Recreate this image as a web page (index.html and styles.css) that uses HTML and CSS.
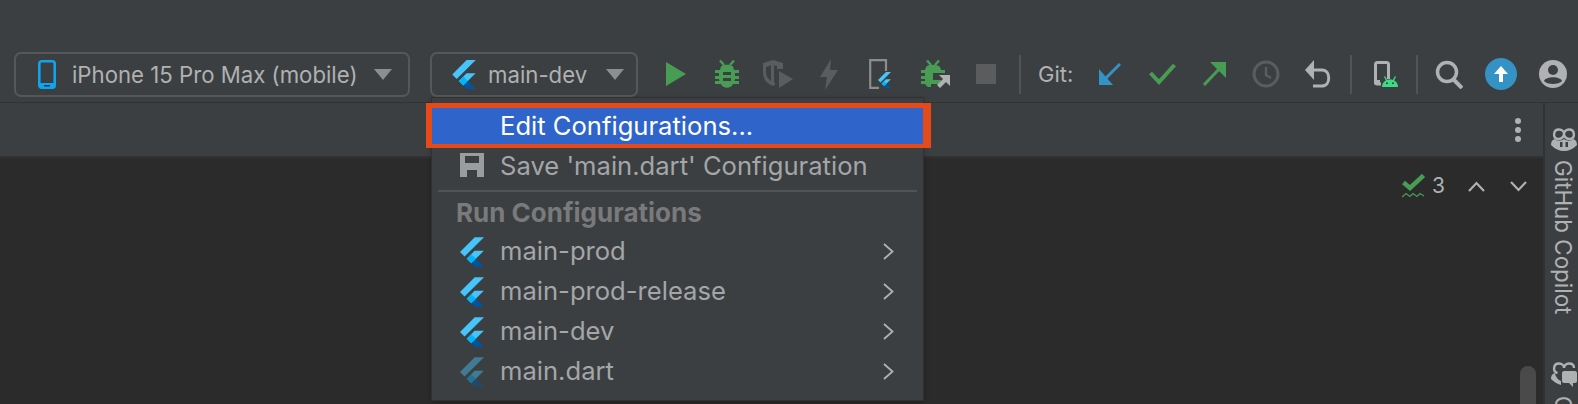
FILE: index.html
```html
<!DOCTYPE html>
<html lang="en">
<head>
<meta charset="utf-8">
<title>IDE run configurations</title>
<link rel="stylesheet" href="styles.css">
</head>
<body>
<svg class="defs" width="0" height="0" aria-hidden="true">
  <symbol id="flutter" viewBox="0 0 257 317">
    <path fill="#47c5fb" d="M157.7 0 0 157.7l48.8 48.8L257.3 0z"/>
    <path fill="#47c5fb" d="M156.6 145.4 72.1 229.8l49 49.7L255.3 145.4z"/>
    <path fill="#00569e" d="m121.1 279.5 37.1 37.1h98.1l-85.5-85.8z"/>
    <path fill="#00b5f8" d="m71.6 230.4 48.8-48.8 49.4 49.2-48.7 48.7z"/>
  </symbol>
  <symbol id="bug" viewBox="0 0 26 30">
    <path fill="none" stroke="#499c54" stroke-width="2.4" d="M6 1.5 10 6M20 1.5 16 6"/>
    <path fill="#499c54" d="M7 7.5C9 5 17 5 19 7.5L20 11H25V14H21V17H25V20H21L20.5 22H25V25H19C17 30 9 30 7 25H1V22H5.500L5 20H1V17H5V14H1V11H6Z"/>
    <path fill="#3c3f41" d="M9 13H17V16H9ZM9 19H17V22H9Z"/>
  </symbol>
</svg>
<div class="window">
  <header class="toolbar">
    <div class="combo combo-device">
      <svg class="phone" width="18" height="29" viewBox="0 0 18 29"><rect x="1.300" y="1.300" width="15.400" height="26.400" rx="2.500" fill="none" stroke="#0ea5ee" stroke-width="2.600"/><rect x="1" y="23" width="16" height="5.500" rx="2" fill="#0ea5ee"/><rect x="6" y="25" width="6" height="1.500" fill="#12384f"/></svg>
      <span class="combo-label">iPhone 15 Pro Max (mobile)</span>
      <span class="caret"></span>
    </div>
    <div class="combo combo-config">
      <svg class="logo-sm" width="24" height="29"><use href="#flutter"/></svg>
      <span class="combo-label">main-dev</span>
      <span class="caret"></span>
    </div>
    <div class="tools tools-run">
      <span class="tool"><svg width="20" height="24" viewBox="0 0 20 24"><path fill="#499c54" d="M0 0 20 12 0 24z"/></svg></span>
      <span class="tool"><svg width="26" height="30"><use href="#bug"/></svg></span>
      <span class="tool"><svg width="30" height="28" viewBox="0 0 30 28"><path fill="#5a5c5e" d="M0 3 10 0 20 3V9H14V6L11 5V22L12 23V25L10 26C4 24 0 19 0 12ZM6 6 3 7V12C3 16 5 19 8 21V5Z" fill-rule="evenodd"/><path fill="#5a5c5e" d="M16 11 30 19 16 28z"/></svg></span>
      <span class="tool"><svg width="18" height="31" viewBox="0 0 18 31"><path fill="#5a5c5e" d="M11 0 0 18H7L5 31 18 11H10Z"/></svg></span>
      <span class="tool"><svg width="22" height="30" viewBox="0 0 22 30"><path fill="none" stroke="#8a8c8e" stroke-width="2.200" d="M17 12V1.200H1.200V28.800H10"/><use href="#flutter" x="9" y="12" width="13" height="18"/></svg></span>
      <span class="tool tool-wide"><svg width="30" height="30" viewBox="0 0 30 30"><path fill="none" stroke="#499c54" stroke-width="2.400" d="M7 1.500 11 6M19 1.500 15 6"/><path fill="#499c54" d="M6 8C8 5 17 5 20 8L21 11H25V14H13V21H21V25H11V28H8C6 27 6 26 5 25H1V22H5V20H1V17H5V14H1V11H5Z"/><path fill="#afb1b3" d="M19 16H30V27L26 23 20 29 17 26 23 20Z"/></svg></span>
      <span class="tool tool-stop"><span class="stop"></span></span>
    </div>
    <span class="sep sep-run"></span>
    <span class="git-label">Git:</span>
    <div class="tools tools-git">
      <span class="tool tool-git"><svg width="22" height="22" viewBox="0 0 22 22"><path fill="none" stroke="#3592c4" stroke-width="3" d="M21 1 4 18"/><path fill="#3592c4" d="M0 6 0 22H14Z"/></svg></span>
      <span class="tool tool-git"><svg width="27" height="22" viewBox="0 0 27 22"><path fill="none" stroke="#499c54" stroke-width="4" d="M1.500 10 10 19 25.500 2"/></svg></span>
      <span class="tool tool-git"><svg width="23" height="24" viewBox="0 0 23 24"><path fill="none" stroke="#499c54" stroke-width="3" d="M1 23 18 5"/><path fill="#499c54" d="M7 0H23V16Z"/></svg></span>
      <span class="tool tool-git"><svg width="28" height="28" viewBox="0 0 28 28"><circle cx="14" cy="14" r="12" fill="none" stroke="#5a5c5e" stroke-width="3"/><path fill="none" stroke="#5a5c5e" stroke-width="2.500" d="M14 7V15L19 18"/></svg></span>
      <span class="tool tool-git"><svg width="26" height="28" viewBox="0 0 26 28"><path fill="none" stroke="#afb1b3" stroke-width="3" d="M6 10H17C26 10 26 26 17 26H8"/><path fill="#afb1b3" d="M9 0V20L0 10Z"/></svg></span>
    </div>
    <span class="sep sep-device"></span>
    <span class="tool tool-git"><svg width="24" height="26" viewBox="0 0 24 26"><path fill="none" stroke="#afb1b3" stroke-width="3" d="M7 23H3.500C2.300 23 1.500 22.200 1.500 21V3.500C1.500 2.300 2.300 1.500 3.500 1.500H12.500C13.700 1.500 14.500 2.300 14.500 3.500V18"/><path fill="#afb1b3" d="M0 19H6V24H2C1 24 0 23 0 22Z"/><path fill="#3ddc84" d="M8 26C8 16 24 16 24 26Z"/><path stroke="#3ddc84" stroke-width="1.400" d="M10.500 15.500 13 20M21.500 15.500 19 20"/><path fill="#3c3f41" d="M12 21.500H14V23H12ZM18 21.500H20V23H18Z"/></svg></span>
    <span class="sep sep-search"></span>
    <span class="tool tool-git"><svg width="28" height="29" viewBox="0 0 28 29"><circle cx="12" cy="12" r="9.500" fill="none" stroke="#afb1b3" stroke-width="3.500"/><path stroke="#afb1b3" stroke-width="4" d="M18 19 27 28"/></svg></span>
    <span class="tool tool-git"><svg width="32" height="32" viewBox="0 0 32 32"><circle cx="16" cy="16" r="16" fill="#3592c4"/><path fill="#fff" d="M16 8 23 16H18V24H14V16H9Z"/></svg></span>
    <span class="tool tool-git"><svg width="28" height="28" viewBox="0 0 28 28"><circle cx="14" cy="14" r="14" fill="#afb1b3"/><circle cx="14" cy="10" r="5" fill="#3c3f41"/><path fill="#3c3f41" d="M5 21C7 16 21 16 23 21 20 25 8 25 5 21Z"/></svg></span>
  </header>
  <div class="workspace">
    <main class="main">
      <div class="tabbar"><span class="kebab"><i></i><i></i><i></i></span></div>
      <div class="editor">
        <div class="inspections">
          <svg width="23" height="24" viewBox="0 0 23 24"><path fill="none" stroke="#499c54" stroke-width="4.500" d="M1.500 8.500 8 14 21.500 1.500"/><path fill="none" stroke="#499c54" stroke-width="1.300" d="M0 23 4 19.500 8 22.500 11 19.500 15 22.500 18 19.500 22 22"/></svg>
          <span class="count">3</span>
          <svg class="nav-up" width="17" height="11" viewBox="0 0 17 11"><path fill="none" stroke="#afb1b3" stroke-width="2.200" d="M1 10 8.500 2 16 10"/></svg>
          <svg class="nav-down" width="17" height="11" viewBox="0 0 17 11"><path fill="none" stroke="#afb1b3" stroke-width="2.200" d="M1 1 8.500 9 16 1"/></svg>
        </div>
        <span class="scrollbar"></span>
      </div>
    </main>
    <aside class="strip">
      <svg class="strip-icon" width="26" height="23" viewBox="0 0 26 23"><path fill="none" stroke="#afb1b3" stroke-width="2.400" d="M6.500 11C1.500 10 2 1.500 8 1.500 11 1.500 13 3.500 13 6 13 3.500 15 1.500 18 1.500 24 1.500 24.500 10 19.500 11 16 11.500 13 9 13 6 13 9 10 11.500 6.500 11Z"/><path fill="#afb1b3" d="M3.500 11C1 12 0 14 0 17 4 21 8 23 13 23 18 23 22 21 26 17 26 14 25 12 22.500 11 20 13.500 15.500 13 13 11 10.500 13 6 13.500 3.500 11Z"/><path fill="#3c3f41" d="M9 14H11.500V19H9ZM14.500 14H17V19H14.500Z"/></svg>
      <span class="strip-label">GitHub Copilot</span>
      <svg class="strip-icon strip-chat" width="26" height="25" viewBox="0 0 26 25"><path fill="none" stroke="#afb1b3" stroke-width="2.400" d="M6.500 11C1.500 10 2 1.500 8 1.500 11 1.500 13 3.500 13 6 13 3.500 15 1.500 18 1.500 21 1.500 23 3 23 6"/><path fill="#afb1b3" d="M3.500 11C1 12 0 14 0 17 3 20 6 22 10 23V19C7 18 5 15 3.500 11Z"/><path fill="#afb1b3" d="M13 9H24C25 9 26 10 26 11V19C26 20 25 21 24 21H22V25L18 21H13C12 21 11 20 11 19V11C11 10 12 9 13 9Z"/></svg>
      <span class="strip-label strip-label-next">GitHub Copilot Chat</span>
    </aside>
  </div>
  <nav class="menu">
    <div class="row row-active"><span class="row-text">Edit Configurations...</span></div>
    <div class="row">
      <svg class="row-icon" width="24" height="24" viewBox="0 0 24 24"><path fill-rule="evenodd" fill="#9a9c9e" d="M0 0H24V24H0ZM5 3V10H19V3ZM7 17V24H17V17Z"/></svg>
      <span class="row-text">Save 'main.dart' Configuration</span>
    </div>
    <div class="menu-sep"></div>
    <div class="menu-heading">Run Configurations</div>
    <div class="row row-config">
      <svg class="row-icon" width="24" height="30"><use href="#flutter"/></svg>
      <span class="row-text">main-prod</span>
      <svg class="chev" width="11" height="17" viewBox="0 0 11 17"><path fill="none" stroke="#afb1b3" stroke-width="1.800" d="M1 1 9.500 8.500 1 16"/></svg>
    </div>
    <div class="row row-config">
      <svg class="row-icon" width="24" height="30"><use href="#flutter"/></svg>
      <span class="row-text">main-prod-release</span>
      <svg class="chev" width="11" height="17" viewBox="0 0 11 17"><path fill="none" stroke="#afb1b3" stroke-width="1.800" d="M1 1 9.500 8.500 1 16"/></svg>
    </div>
    <div class="row row-config">
      <svg class="row-icon" width="24" height="30"><use href="#flutter"/></svg>
      <span class="row-text">main-dev</span>
      <svg class="chev" width="11" height="17" viewBox="0 0 11 17"><path fill="none" stroke="#afb1b3" stroke-width="1.800" d="M1 1 9.500 8.500 1 16"/></svg>
    </div>
    <div class="row row-config">
      <svg class="row-icon row-icon-dim" width="24" height="30"><use href="#flutter"/></svg>
      <span class="row-text">main.dart</span>
      <svg class="chev" width="11" height="17" viewBox="0 0 11 17"><path fill="none" stroke="#afb1b3" stroke-width="1.800" d="M1 1 9.500 8.500 1 16"/></svg>
    </div>
  </nav>
</div>
</body>
</html>
```
FILE: styles.css
```css
* { box-sizing: border-box; }
html, body { margin: 0; padding: 0; }
body {
  width: 1578px;
  height: 404px;
  overflow: hidden;
  background: #3c3f41;
  font-family: Inter, "Liberation Sans", sans-serif;
  color: #afb1b3;
}
.defs { position: absolute; }
.window {
  position: relative;
  width: 1578px;
  height: 404px;
  display: flex;
  flex-direction: column;
  overflow: hidden;
}
.toolbar {
  flex: none;
  height: 103px;
  padding: 52px 0 6px 14px;
  display: flex;
  align-items: center;
  background: #3c3f41;
  border-bottom: 1px solid #323232;
}
.combo {
  flex: none;
  height: 45px;
  display: flex;
  align-items: center;
  border: 2px solid #555759;
  border-radius: 7px;
}
.combo-device { width: 396px; padding-left: 22px; }
.combo-config { width: 208px; margin-left: 20px; padding-left: 20px; }
.combo-label { font-size: 22.200px; color: #afb1b3; white-space: nowrap; }
.combo-device .combo-label { margin-left: 16px; }
.combo-config .combo-label { margin-left: 12px; }
.caret {
  margin-left: 16px;
  width: 0;
  height: 0;
  border-left: 9px solid transparent;
  border-right: 9px solid transparent;
  border-top: 11px solid #8c8e90;
}
.combo-config .caret { margin-left: 19px; }
.tools { display: flex; align-items: center; flex: none; }
.tools-run { margin-left: 12px; }
.tool { flex: none; width: 51px; display: flex; justify-content: center; align-items: center; }
.tool-wide { width: 60px; }
.tool-stop { width: 42px; }
.tool-git { width: 52px; }
.stop { width: 20px; height: 20px; background: #5a5c5e; }
.sep { flex: none; width: 2px; height: 39px; background: #515456; }
.sep-run { margin-left: 12px; }
.git-label { flex: none; margin-left: 17px; font-size: 22px; }
.tools-git { margin-left: 11px; }
.sep-device { margin: 0 8px 0 6px; }
.sep-search { margin: 0 5px 0 4px; }
.workspace { flex: 1; display: flex; min-height: 0; }
.main { flex: 1; display: flex; flex-direction: column; min-width: 0; }
.tabbar {
  flex: none;
  height: 55px;
  display: flex;
  align-items: center;
  justify-content: flex-end;
  padding-right: 22px;
  background: #3c3f41;
  border-bottom: 2px solid #323232;
}
.kebab { display: flex; flex-direction: column; gap: 3px; }
.kebab i { display: block; width: 6px; height: 6px; border-radius: 50%; background: #afb1b3; }
.editor { position: relative; flex: 1; background: #2b2b2b; }
.inspections {
  display: flex;
  align-items: center;
  justify-content: flex-end;
  padding: 16px 16px 0 0;
}
.count { margin-left: 7px; font-size: 21px; line-height: 24px; }
.nav-up { margin-left: 23px; }
.nav-down { margin-left: 25px; }
.scrollbar {
  position: absolute;
  right: 7px;
  top: 208px;
  width: 16px;
  height: 60px;
  border-radius: 8px;
  background: #4a4a4a;
}
.strip {
  flex: none;
  width: 35px;
  background: #3c3f41;
  border-left: 2px solid #323232;
  padding-top: 25px;
  display: flex;
  flex-direction: column;
  align-items: center;
  overflow: hidden;
}
.strip-icon { flex: none; margin-left: 4px; }
.strip-label {
  flex: none;
  margin-top: 9px;
  margin-left: 3px;
  writing-mode: vertical-rl;
  font-size: 22.400px;
  line-height: 22px;
  color: #afb1b3;
}
.strip-label-next { margin-top: 9px; }
.strip-chat { margin-top: 48px; }
.menu {
  position: absolute;
  left: 432px;
  top: 98px;
  width: 491px;
  height: 302px;
  padding-top: 10px;
  background: #3c3f41;
  box-shadow: 0 0 0 1px #2f3133, 0 2px 6px rgba(0, 0, 0, 0.3);
}
.row {
  height: 40px;
  display: flex;
  align-items: center;
  padding-left: 28px;
  font-size: 25.600px;
  color: #a4a6a8;
}
.row-active {
  position: relative;
  height: 36px;
  padding: 0 0 2px 68px;
  margin-bottom: 1px;
  background: #2f65ca;
  color: #fff;
}
.row-active::after {
  content: "";
  position: absolute;
  top: -5px;
  right: -8px;
  bottom: -4px;
  left: -6px;
  border-style: solid;
  border-color: #e64a19;
  border-width: 5px 8px 4px 6px;
}
.row-icon { flex: none; }
.row-icon-dim { opacity: 0.45; }
.row-text { margin-left: 16px; white-space: nowrap; }
.row-active .row-text { margin-left: 0; }
.row-config .row-text { margin-bottom: 3px; }
.chev { margin-left: auto; margin-right: 29px; }
.row-config .chev { margin-bottom: 2px; }
.menu-sep { height: 2px; margin: 5px 6px 0; background: #515456; }
.menu-heading {
  height: 40px;
  display: flex;
  align-items: center;
  padding-left: 24px;
  font-size: 26px;
  font-weight: 700;
  color: #787a7c;
}
```
